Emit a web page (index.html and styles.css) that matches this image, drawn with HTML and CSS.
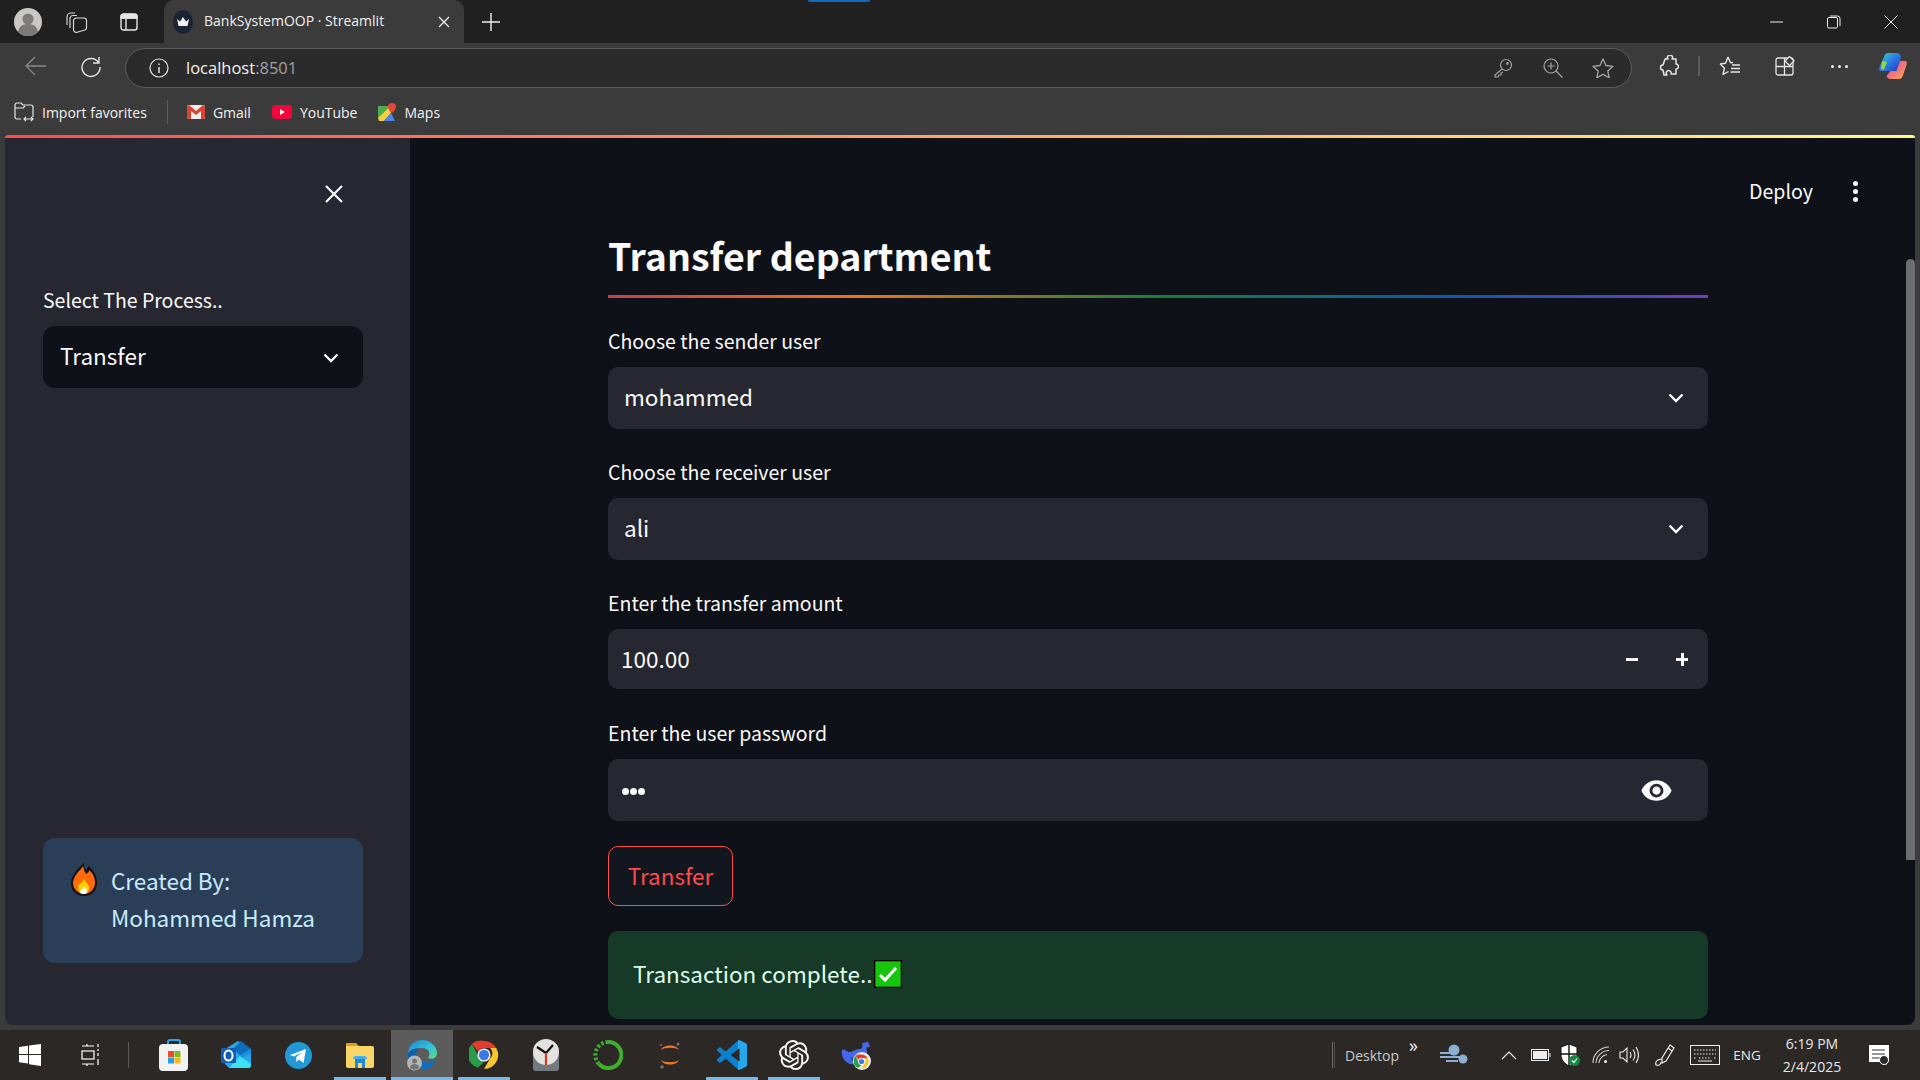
FILE: index.html
```html
<!DOCTYPE html>
<html lang="en">

<head>
  <meta charset="utf-8" />
  <title>BankSystemOOP · Streamlit</title>
  <link rel="stylesheet" href="styles.css">
</head>

<body>

  <svg class="defs" width="0" height="0">
    <symbol id="chrome" viewBox="0 0 32 32">
      <path d="M16 1a15 15 0 0 1 13 7.500H16a7.500 7.500 0 0 0-6.500 3.750L3 3.900A15 15 0 0 1 16 1z" fill="#e33b2e" />
      <path d="M3 4.500l6.500 11.250a7.500 7.500 0 0 0 6.500 7.750L9.500 29.500A15 15 0 0 1 3 4.500z" fill="#2a9d4a" />
      <path d="M29 8.500A15 15 0 0 1 16 31l6.500-11.250a7.500 7.500 0 0 0 0-11.250z" fill="#fbc52d" />
      <circle cx="16" cy="16" r="7" fill="#fff" />
      <circle cx="16" cy="16" r="5.500" fill="#3b78e7" />
    </symbol>
  </svg>

  <header class="tabbar">
    <div class="slot slot-avatar">
      <svg width="28" height="28" viewBox="0 0 28 28">
        <circle cx="14" cy="14" r="14" fill="#c9c8c3" />
        <circle cx="14" cy="11" r="5.500" fill="#7c7b78" />
        <path d="M4 24c1-6 5-8 10-8s9 2 10 8a14 14 0 0 1-20 0z" fill="#7c7b78" />
      </svg>
    </div>
    <div class="slot slot-workspaces">
      <svg width="22" height="22" viewBox="0 0 22 22" fill="none" stroke="#d8d8d8" stroke-width="1.200">
        <path d="M1 14V6a4 4 0 0 1 4-4h4" />
        <path d="M4 17V7.500a3 3 0 0 1 3-3h4" />
        <path d="M7.500 10a3 3 0 0 1 3-3H18a2.500 2.500 0 0 1 2.500 2.500V17a2 2 0 0 1-1.500 2l-7 2a3 3 0 0 1-4.500-3z" />
      </svg>
    </div>
    <div class="slot slot-vtabs">
      <svg width="18" height="18" viewBox="0 0 18 18" fill="none" stroke="#e6e6e6" stroke-width="1.400">
        <rect x="1" y="1" width="16" height="16" rx="2.500" />
        <path d="M1 5h16M6 5v12" />
        <path d="M1 3.500a2 2 0 0 1 2-2h12a2 2 0 0 1 2 2v1.500H1z" fill="#e6e6e6" />
      </svg>
    </div>
    <div class="tab">
      <svg class="tab-icon" width="20" height="24" viewBox="0 0 20 24">
        <ellipse cx="10" cy="12" rx="10" ry="12" fill="#1c2333" />
        <path d="M4 9l3 2.500L10 7l3 4.500L16 9l-1.500 7h-9z" fill="#f2f2f2" />
      </svg>
      <span class="tab-title">BankSystemOOP · Streamlit</span>
      <svg class="tab-close" width="12" height="12" viewBox="0 0 12 12" stroke="#eee" stroke-width="1.300">
        <path d="M1 1l10 10M11 1L1 11" />
      </svg>
    </div>
    <div class="slot slot-newtab">
      <svg width="18" height="18" viewBox="0 0 18 18" stroke="#eee" stroke-width="1.400">
        <path d="M9 0v18M0 9h18" />
      </svg>
    </div>
    <div class="win-controls">
      <div class="slot slot-win">
        <svg width="14" height="14" viewBox="0 0 14 14" stroke="#eee"><path d="M0 7h13" /></svg>
      </div>
      <div class="slot slot-win">
        <svg width="14" height="14" viewBox="0 0 14 14" fill="none" stroke="#eee">
          <rect x="0.500" y="2.500" width="10" height="10.500" rx="1.500" />
          <path d="M3 1h7.500a2.500 2.500 0 0 1 2.500 2.500V11" />
        </svg>
      </div>
      <div class="slot slot-win">
        <svg width="14" height="14" viewBox="0 0 14 14" stroke="#eee"><path d="M0.500 0.500l13 13M13.500 0.500l-13 13" /></svg>
      </div>
    </div>
    <span class="sliver"></span>
  </header>

  <div class="toolbar">
    <div class="slot slot-tool">
      <svg width="22" height="20" viewBox="0 0 22 20" fill="none" stroke="#8a8a8a" stroke-width="1.300">
        <path d="M21 10H1M10 1l-9 9 9 9" />
      </svg>
    </div>
    <div class="slot slot-tool">
      <svg class="reload" width="22" height="22" viewBox="0 0 22 22" fill="none" stroke="#e6e6e6" stroke-width="1.400">
        <path d="M18.500 6.500A9 9 0 1 0 20 11" />
        <path d="M19 1v6h-6" />
      </svg>
    </div>
    <div class="addressbar">
      <svg class="addr-info" width="20" height="20" viewBox="0 0 20 20" fill="none" stroke="#e6e6e6" stroke-width="1.200">
        <circle cx="10" cy="10" r="9" />
        <path d="M10 9v6" stroke-width="1.500" />
        <path d="M10 5.500v1.500" stroke-width="1.500" />
      </svg>
      <span class="addr-url">localhost<span class="addr-port">:8501</span></span>
      <svg class="addr-key" width="20" height="20" viewBox="0 0 20 20" fill="none" stroke="#a3a3a3" stroke-width="1.200">
        <circle cx="13" cy="7" r="5.500" />
        <path d="M9 11l-7 6v2h3l1-2h2v-2l2-1" />
        <circle cx="14.500" cy="5.500" r="0.800" />
      </svg>
      <svg class="addr-zoom" width="20" height="20" viewBox="0 0 20 20" fill="none" stroke="#a3a3a3" stroke-width="1.200">
        <circle cx="8" cy="8" r="7" />
        <path d="M13 13l6.500 6.500M4.500 8h7M8 4.500v7" />
      </svg>
      <svg class="addr-star" width="22" height="20" viewBox="0 0 22 20" fill="none" stroke="#a3a3a3" stroke-width="1.300" stroke-linejoin="round">
        <path d="M11 1l3 6.500 7 .8-5.200 4.700 1.400 6.800L11 16.400 4.800 19.800l1.400-6.800L1 8.300l7-.8z" />
      </svg>
    </div>
    <div class="slot slot-tool slot-puzzle">
      <svg width="20" height="22" viewBox="0 0 20 22" fill="none" stroke="#e6e6e6" stroke-width="1.500" stroke-linejoin="round">
        <path d="M6 4h3a2.500 2.500 0 1 1 4 0h4v5a2.500 2.500 0 1 1 0 5v5h-5a2.500 2.500 0 1 0-4 1H5l-1-5a2.500 2.500 0 1 1 0-5z" />
      </svg>
    </div>
    <span class="tool-sep"></span>
    <div class="slot slot-tool">
      <svg width="22" height="20" viewBox="0 0 22 20" fill="none" stroke="#e6e6e6" stroke-width="1.400" stroke-linejoin="round">
        <path d="M9 1l2.400 5.500 2.600.3M1 8l5.500-.8L9 1M1 8l4.400 4L4 18.500l5.500-3" />
        <path d="M13 9h8M12 12.500h9M11.500 16h9.500" />
      </svg>
    </div>
    <div class="slot slot-tool">
      <svg width="20" height="20" viewBox="0 0 20 20" fill="none" stroke="#e6e6e6" stroke-width="1.300">
        <rect x="1" y="2" width="17" height="17" rx="2" />
        <path d="M9.500 2v17M1 10.500h17" />
        <path d="M14.500 0.500l4.500 4.500-4.500 4.500L10 5z" fill="#3b3b3b" />
      </svg>
    </div>
    <div class="slot slot-tool">
      <span class="dots"><i></i><i></i><i></i></span>
    </div>
    <div class="slot slot-tool slot-copilot">
      <svg width="28" height="28" viewBox="0 0 28 28">
        <defs>
          <linearGradient id="copA" x1="0" y1="0" x2="1" y2="1">
            <stop offset="0" stop-color="#3bd5c8" />
            <stop offset="0.500" stop-color="#2b7be6" />
            <stop offset="1" stop-color="#2536b8" />
          </linearGradient>
          <linearGradient id="copB" x1="0" y1="0" x2="1" y2="1">
            <stop offset="0" stop-color="#d24fd8" />
            <stop offset="0.500" stop-color="#f4707d" />
            <stop offset="1" stop-color="#fbb14c" />
          </linearGradient>
        </defs>
        <path d="M9 1h9c2 0 3 1 4 4l-4 14H12L1 19c-1-1-1-3 0-5l4-9c1-3 2-4 4-4z" fill="url(#copA)" />
        <path d="M3 9l5 1-3 8-3-1z" fill="#8bd94a" />
        <path d="M21 9h5c2 0 2 2 1.500 4l-3 9c-1 3-2 5-5 5h-8c-2 0-3-1-4-3l4-5h6z" fill="url(#copB)" />
      </svg>
    </div>
  </div>

  <nav class="bookmarks">
    <a class="bm bm-import">
      <svg width="20" height="20" viewBox="0 0 20 20" fill="none" stroke="#e6e6e6" stroke-width="1.200">
        <path d="M7 17H3a2 2 0 0 1-2-2V3a2 2 0 0 1 2-2h4l2 2h8a2 2 0 0 1 2 2v10" />
        <path d="M1 6h8l2-2" />
        <path d="M10 17h9M12 15l-2 2 2 2M17 15l2 2-2 2" />
      </svg>
      Import favorites
    </a>
    <span class="bm-sep"></span>
    <a class="bm">
      <svg width="18" height="14" viewBox="0 0 18 14">
        <rect width="18" height="14" rx="1.500" fill="#eee" />
        <path d="M0 1.500v11A1.500 1.500 0 0 0 1.500 14H4V6l5 4 5-4v8h2.500a1.500 1.500 0 0 0 1.500-1.500v-11L16 0 9 6 2 0z" fill="#d9432f" />
      </svg>
      Gmail
    </a>
    <a class="bm">
      <svg width="20" height="14" viewBox="0 0 20 14">
        <rect width="20" height="14" rx="4" fill="#f4063a" />
        <path d="M8 4l5 3-5 3z" fill="#fff" />
      </svg>
      YouTube
    </a>
    <a class="bm">
      <svg width="18" height="18" viewBox="0 0 18 18">
        <path d="M0 3h12L0 15z" fill="#4cae4f" />
        <path d="M0 15L12 3l1 7-7 8H1z" fill="#f7cf3e" />
        <path d="M6 18l7-8 4 8z" fill="#4a86e8" />
        <path d="M14 0a4 4 0 0 1 4 4c0 3-4 6-4 6s-4-3-4-6a4 4 0 0 1 4-4z" fill="#e5483a" />
      </svg>
      Maps
    </a>
  </nav>

  <div class="rainbow-bar"></div>

  <div class="app">
    <aside class="sidebar">
      <div class="side-close">
        <svg width="18" height="18" viewBox="0 0 18 18" stroke="#fafafa" stroke-width="2.200">
          <path d="M1 1l16 16M17 1L1 17" />
        </svg>
      </div>
      <label class="lbl">Select The Process..</label>
      <div class="select select-dark">
        <span>Transfer</span>
        <svg class="chev" width="16" height="10" viewBox="0 0 16 10" fill="none" stroke="#fafafa" stroke-width="2.400">
          <path d="M1.500 1.500L8 8l6.500-6.500" />
        </svg>
      </div>
      <div class="credit">
        <svg class="fire" width="28" height="35" viewBox="0 0 28 35">
          <path d="M13 1c2 2 0 4 3 7 1-1 2-2 2-4 6 4 9 10 9 17 0 8-6 13-13 13S1 29 1 21c0-5 3-8 5-12 2-3 6-5 7-8z" fill="#111" />
          <path d="M13 4c1 3 1 5 3 8 2-1 3-2 3-4 4 3 6 8 6 13 0 6-5 11-11 11S3 27 3 21c0-4 2-7 5-11 2-2 4-4 5-6z" fill="#ff6a0d" />
          <path d="M14 17c1 3 4 4 5 8 0 4-2 7-5 7s-6-3-6-7c0-2 2-3 3-4 1 0 2-2 3-4z" fill="#ffd500" />
          <path d="M14 25c1 1 3 2 3 4s-1 3-3 3-4-1-4-2c0-2 2-2 4-5z" fill="#fff" />
        </svg>
        <div class="credit-text">Created By:<br>Mohammed Hamza</div>
      </div>
    </aside>

    <main class="main">
      <div class="deploy">
        <span>Deploy</span>
        <span class="kebab"><i></i><i></i><i></i></span>
      </div>
      <span class="scroll-thumb"></span>

      <h1 class="page-title">Transfer department</h1>
      <hr class="rule">

      <div class="field">
        <label class="lbl">Choose the sender user</label>
        <div class="select">
          <span>mohammed</span>
          <svg class="chev" width="16" height="10" viewBox="0 0 16 10" fill="none" stroke="#fafafa" stroke-width="2.400">
            <path d="M1.500 1.500L8 8l6.500-6.500" />
          </svg>
        </div>
      </div>

      <div class="field">
        <label class="lbl">Choose the receiver user</label>
        <div class="select">
          <span>ali</span>
          <svg class="chev" width="16" height="10" viewBox="0 0 16 10" fill="none" stroke="#fafafa" stroke-width="2.400">
            <path d="M1.500 1.500L8 8l6.500-6.500" />
          </svg>
        </div>
      </div>

      <div class="field field-number">
        <label class="lbl">Enter the transfer amount</label>
        <div class="number-input">
          <span class="number-value">100.00</span>
          <span class="stepper stepper-minus"></span>
          <span class="stepper stepper-plus"></span>
        </div>
      </div>

      <div class="field field-pass">
        <label class="lbl">Enter the user password</label>
        <div class="pass-input">
          <span class="pass-dots"><i></i><i></i><i></i></span>
          <svg class="eye" width="33" height="33" viewBox="0 0 24 24" fill="#fafafa">
            <path d="M12 4.500C7 4.500 2.730 7.610 1 12c1.730 4.390 6 7.500 11 7.500s9.270-3.110 11-7.500c-1.730-4.390-6-7.500-11-7.500zM12 17c-2.760 0-5-2.240-5-5s2.240-5 5-5 5 2.240 5 5-2.240 5-5 5zm0-8c-1.660 0-3 1.340-3 3s1.340 3 3 3 3-1.340 3-3-1.340-3-3-3z" />
          </svg>
        </div>
      </div>

      <button class="btn">Transfer</button>

      <div class="success">
        <span class="success-text">Transaction complete..</span>
        <svg class="success-check" width="28" height="28" viewBox="0 0 28 28">
          <rect x="0.500" y="0.500" width="27" height="27" fill="#16c60c" stroke="#000" stroke-width="1.600" />
          <path d="M6 15l5 5L22 8" fill="none" stroke="#fff" stroke-width="3" />
        </svg>
      </div>
    </main>
  </div>

  <footer class="taskbar">
    <div class="slot slot-start">
      <svg width="22" height="22" viewBox="0 0 22 22" fill="#fff">
        <path d="M0 3l9-1.200V10H0zM10 1.600L22 0v10H10zM0 11h9v8.500L0 18.300zM10 11h12v11l-12-1.700z" />
      </svg>
    </div>
    <div class="slot slot-taskview">
      <svg width="20" height="24" viewBox="0 0 20 24" fill="none" stroke="#fff" stroke-width="1.200">
        <rect x="1" y="8" width="12" height="8" />
        <path d="M1 3h12M1 21h12M6 1v2M6 21v2M17 1v3M17 6v2M17 10v3M17 16v6" />
      </svg>
    </div>
    <span class="task-sep"></span>

    <div class="task"><svg width="30" height="32" viewBox="0 0 30 32">
        <path d="M9 7V3q0-2 2-2h8q2 0 2 2v4" fill="none" stroke="#2aa3e8" stroke-width="2" />
        <rect y="5" width="29" height="27" rx="4" fill="#f2f2f2" />
        <rect x="9" y="12" width="6" height="6" fill="#e8502c" />
        <rect x="15.500" y="12" width="6" height="6" fill="#7fbb24" />
        <rect x="9" y="18.500" width="6" height="6" fill="#1fa2e8" />
        <rect x="15.500" y="18.500" width="6" height="6" fill="#fdb813" />
      </svg></div>
    <div class="task"><svg width="30" height="28" viewBox="0 0 30 28">
        <path d="M4 8l13-8 13 8v16a3 3 0 0 1-3 3H8l-4-4z" fill="#28a8ea" />
        <path d="M12 8l8-8 10 8-11 6z" fill="#0f6cbd" />
        <path d="M19 14l11-6v4l-11 6z" fill="#1490df" />
        <path d="M8 27l11-12 11 8v1a3 3 0 0 1-3 3z" fill="#3de0f5" />
        <rect y="7" width="15" height="15" rx="1" fill="#0f5fb5" />
        <ellipse cx="7.500" cy="14.500" rx="4" ry="5" fill="none" stroke="#fff" stroke-width="2" />
      </svg></div>
    <div class="task"><svg width="27" height="27" viewBox="0 0 27 27">
        <circle cx="13.500" cy="13.500" r="13.500" fill="#2298d6" />
        <path d="M5 13l16-6-2.500 14-4.500-3.500-2.500 2.500-.5-4.500 6-5.500-8 4.500z" fill="#fff" />
      </svg></div>
    <div class="task task-open"><svg width="28" height="26" viewBox="0 0 28 26">
        <path d="M0 2a1 1 0 0 1 1-1h9l3 3h-13z" fill="#e0a010" />
        <path d="M0 4h26a2 2 0 0 1 2 2v18a2 2 0 0 1-2 2H2a2 2 0 0 1-2-2z" fill="#fbd666" />
        <path d="M9 26v-9h10v9h-3v-5h-4v5z" fill="#1f8ad3" />
        <path d="M7 17q0-3 3-3h8q3 0 3 3z" fill="#42aef0" />
      </svg></div>
    <div class="task task-open task-active"><svg width="30" height="31" viewBox="0 0 30 31">
        <defs>
          <linearGradient id="edgeA" x1="0" y1="0" x2="1" y2="1">
            <stop offset="0" stop-color="#1b86d6" />
            <stop offset="0.600" stop-color="#35c6d8" />
            <stop offset="1" stop-color="#5fdc7a" />
          </linearGradient>
        </defs>
        <path d="M1 13C2 5 8 0 15 0c8 0 15 6 15 13 0 5-5 7-9 5 3-4 1-10-6-10C8 8 4 9 1 13z" fill="url(#edgeA)" />
        <path d="M1 13c3-4 7-5 11-4-3 2-4 6-1 11l-6 4c-3-3-5-7-4-11z" fill="#0f5fb0" />
        <path d="M14 20c4 4 11 3 15-1-2 7-8 11-15 11z" fill="#0e6fc4" />
        <circle cx="7.500" cy="23" r="7.500" fill="#b5b5b5" />
        <circle cx="7.500" cy="21" r="2.500" fill="#757575" />
        <path d="M3 28c0-3 2-4 4.500-4s4.500 1 4.500 4a7.500 7.500 0 0 1-9 0z" fill="#757575" />
      </svg></div>
    <div class="task task-open"><svg width="30" height="30" viewBox="0 0 32 32"><use href="#chrome" /></svg></div>
    <div class="task"><svg width="30" height="32" viewBox="0 0 30 32">
        <path d="M2 12C2 5 8 1 15 1s13 4 13 11v17a3 3 0 0 1-3 3H5a3 3 0 0 1-3-3z" fill="#727a80" />
        <circle cx="15" cy="13" r="13" fill="#e2e2e0" />
        <path d="M6 8l9 6 7-8" fill="none" stroke="#111" stroke-width="2.200" />
        <path d="M15 14v12" stroke="#d8391c" stroke-width="2.200" />
      </svg></div>
    <div class="task"><svg width="30" height="30" viewBox="0 0 30 30" fill="none">
        <path d="M15 2a13 13 0 1 1-9 22" stroke="#3fb02b" stroke-width="4" />
        <path d="M15 2A13 13 0 0 0 6 24" stroke="#3fb02b" stroke-width="4" stroke-dasharray="2.500 2" />
      </svg></div>
    <div class="task"><svg width="24" height="30" viewBox="0 0 24 30">
        <path d="M3 10c2-6 16-6 18 0-3-3-15-3-18 0z" fill="#f37626" />
        <path d="M3 20c2 6 16 6 18 0-3 3-15 3-18 0z" fill="#f37626" />
        <circle cx="20" cy="4" r="1.500" fill="#767677" />
        <circle cx="4" cy="27" r="1.800" fill="#767677" />
        <circle cx="3" cy="5" r="1" fill="#767677" />
      </svg></div>
    <div class="task task-open"><svg width="30" height="30" viewBox="0 0 24 24">
        <defs>
          <linearGradient id="vsA" x1="0" y1="0" x2="1" y2="0">
            <stop offset="0.700" stop-color="#0d7fcf" />
            <stop offset="0.700" stop-color="#25a7ed" />
          </linearGradient>
        </defs>
        <path d="M23.150 2.587L18.210.21a1.494 1.494 0 0 0-1.705.29l-9.460 8.630-4.120-3.128a.999.999 0 0 0-1.276.057L.327 7.261A1 1 0 0 0 .326 8.740L3.899 12 .326 15.260a1 1 0 0 0 .001 1.479L1.650 17.940a.999.999 0 0 0 1.276.057l4.120-3.128 9.460 8.630a1.492 1.492 0 0 0 1.704.29l4.942-2.377A1.500 1.500 0 0 0 24 20.060V3.939a1.500 1.500 0 0 0-.85-1.352zm-5.146 14.861L10.826 12l7.178-5.448v10.896z" fill="url(#vsA)" />
      </svg></div>
    <div class="task task-open"><svg width="30" height="30" viewBox="0 0 24 24" fill="#f4f4f4">
        <path d="M22.282 9.821a5.985 5.985 0 0 0-.516-4.911 6.046 6.046 0 0 0-6.510-2.900A6.065 6.065 0 0 0 4.981 4.182a5.985 5.985 0 0 0-3.998 2.900 6.046 6.046 0 0 0 .743 7.097 5.980 5.980 0 0 0 .511 4.911 6.051 6.051 0 0 0 6.515 2.900A5.985 5.985 0 0 0 13.260 24a6.056 6.056 0 0 0 5.772-4.206 5.989 5.989 0 0 0 3.998-2.900 6.056 6.056 0 0 0-.748-7.073zm-9.022 12.608a4.476 4.476 0 0 1-2.876-1.041l.142-.080 4.778-2.758a.795.795 0 0 0 .393-.681v-6.737l2.020 1.169a.071.071 0 0 1 .038.052v5.583a4.504 4.504 0 0 1-4.495 4.494zm-9.661-4.125a4.471 4.471 0 0 1-.535-3.014l.142.085 4.783 2.758a.771.771 0 0 0 .781 0l5.843-3.369v2.332a.080.080 0 0 1-.033.062L9.740 19.950a4.499 4.499 0 0 1-6.141-1.646zM2.341 7.896a4.485 4.485 0 0 1 2.365-1.973V11.600a.766.766 0 0 0 .388.677l5.814 3.354-2.020 1.169a.076.076 0 0 1-.071 0l-4.830-2.787A4.504 4.504 0 0 1 2.341 7.872zm16.596 3.856L13.104 8.364 15.119 7.200a.076.076 0 0 1 .071 0l4.830 2.791a4.494 4.494 0 0 1-.676 8.105v-5.678a.790.790 0 0 0-.407-.667zm2.011-3.023l-.142-.085-4.774-2.782a.776.776 0 0 0-.785 0L9.409 9.230V6.897a.066.066 0 0 1 .028-.061l4.830-2.787a4.499 4.499 0 0 1 6.680 4.660zM8.307 12.863l-2.020-1.164a.080.080 0 0 1-.038-.057V6.074a4.499 4.499 0 0 1 7.376-3.454l-.142.081L8.704 5.459a.795.795 0 0 0-.393.681zm1.098-2.365l2.602-1.500 2.607 1.500v2.999l-2.597 1.500-2.607-1.500z" />
      </svg></div>
    <div class="task task-badge"><svg width="30" height="30" viewBox="0 0 30 30">
        <path d="M1 10c3-2 4 2 8 2 3 0 5-3 10-3 2 0 3-3 2-6 3 0 5-1 6-2 0 3 2 4 2 6-1 0-3 0-4 1 2 3 1 9-3 13-3 3-8 4-13 3C3 22 0 16 1 10z" fill="#4468e8" />
        <path d="M9 16c3 4 6 4 9 2-2 3-5 4-7 3z" fill="#2d3a8f" />
        <circle cx="21" cy="21" r="9" fill="#eee" />
      </svg>
      <svg class="badge-chrome" width="15" height="15" viewBox="0 0 32 32"><use href="#chrome" /></svg>
    </div>

    <div class="tray">
      <span class="tray-sep"></span>
      <span class="tray-desktop">Desktop</span>
      <span class="tray-more">»</span>
      <svg class="t-wind" width="28" height="22" viewBox="0 0 28 22" fill="#8eaed0">
        <circle cx="14" cy="6" r="5.500" />
        <circle cx="23" cy="15" r="4.500" />
        <path d="M0 8h12v2H0zM0 12h24v2H0zM6 16h12v2H6z" />
      </svg>
      <svg class="t-caret" width="16" height="9" viewBox="0 0 16 9" fill="none" stroke="#eee" stroke-width="1.200">
        <path d="M1 8l7-7 7 7" />
      </svg>
      <svg class="t-batt" width="20" height="12" viewBox="0 0 20 12" fill="none" stroke="#eee">
        <rect x="0.500" y="0.500" width="17" height="11" />
        <rect x="2" y="2" width="14" height="8" fill="#eee" stroke="none" />
        <path d="M19 4v4" />
      </svg>
      <svg class="t-shield" width="20" height="24" viewBox="0 0 20 24">
        <path d="M9 1l8 3v8c0 5-4 9-8 11-4-2-8-6-8-11V4z" fill="#fff" stroke="#111" />
        <path d="M9 1v22M1 11h16" stroke="#111" stroke-width="1.400" />
        <circle cx="14.500" cy="17.500" r="5.500" fill="#128a3f" />
        <path d="M12 17.500l2 2 3-4" fill="none" stroke="#fff" stroke-width="1.200" />
      </svg>
      <svg class="t-wifi" width="18" height="18" viewBox="0 0 18 18" fill="none" stroke="#cfcfcf" stroke-width="1.100">
        <path d="M1 17A16 16 0 0 1 17 1M4 17A13 13 0 0 1 17 4.500M7 17a10 10 0 0 1 8-8.500" />
        <circle cx="13.500" cy="15.500" r="1.500" fill="#eee" stroke="none" />
      </svg>
      <svg class="t-sound" width="20" height="18" viewBox="0 0 20 18" fill="none" stroke="#eee" stroke-width="1.100">
        <path d="M1 6h3l4-4v14l-4-4H1z" />
        <path d="M11 6q2 3 0 6M14 3.500q4 5.500 0 11M17 1q5 8 0 16" />
      </svg>
      <svg class="t-pen" width="22" height="24" viewBox="0 0 22 24" fill="none" stroke="#eee" stroke-width="1.200">
        <path d="M15 2l4 3-8 13-4 2 0-5z" />
        <path d="M13 5l4 3M7 16c-5 0-7 3-6 6 2 1 5 0 5-3" />
      </svg>
      <svg class="t-keys" width="30" height="20" viewBox="0 0 30 20" fill="none" stroke="#eee">
        <rect x="0.500" y="0.500" width="29" height="19" />
        <path d="M4 5h22M4 9h22M4 13h2M9 13h12M24 13h2" stroke-dasharray="1.500 1.500" />
        <path d="M8 16h14" />
      </svg>
      <span class="t-eng">ENG</span>
      <span class="t-clock">6:19 PM<br>2/4/2025</span>
      <svg class="t-notif" width="20" height="20" viewBox="0 0 20 20">
        <path d="M0 0h20v16l-3 4-4-3H0z" fill="#fff" />
        <path d="M3 5h13M3 9h13M3 13h8" stroke="#333" stroke-width="1.200" />
        <circle cx="15" cy="15" r="4.500" fill="#2b2826" stroke="#fff" />
      </svg>
    </div>
  </footer>

</body>

</html>
```

FILE: styles.css
```css
* {
  box-sizing: border-box;
}

body {
  width: 1920px;
  height: 1080px;
  margin: 0;
  overflow: hidden;
  display: flex;
  flex-direction: column;
  background-color: #3b3b3b;
  font-family: "Open Sans", "Noto Sans", sans-serif;
  color: #fafafa;
}

.defs {
  position: absolute;
}

svg {
  flex: none;
  display: block;
}

.slot {
  display: flex;
  align-items: center;
  justify-content: center;
  flex: none;
}

/* browser tabs */
.tabbar {
  position: relative;
  display: flex;
  align-items: center;
  height: 43px;
  flex: none;
  background-color: #202020;
}

.slot-avatar {
  width: 56px;
}

.slot-workspaces {
  width: 41px;
}

.slot-vtabs {
  width: 64px;
  margin-right: 3px;
}

.tab {
  display: flex;
  align-items: center;
  width: 300px;
  height: 43px;
  padding-left: 9px;
  background-color: #3b3b3b;
  border-radius: 10px 10px 0 0;
}

.tab-title {
  flex: 1;
  margin: 0 0 2px 11px;
  font-size: 14px;
  color: #f0f0f0;
  white-space: nowrap;
}

.tab-close {
  margin-right: 14px;
}

.slot-newtab {
  width: 54px;
}

.win-controls {
  display: flex;
  margin-left: auto;
  margin-right: 1px;
}

.slot-win {
  width: 57px;
}

.sliver {
  position: absolute;
  left: 808px;
  top: 0;
  width: 62px;
  height: 2px;
  background-color: #0f6cbd;
  border-radius: 0 0 2px 2px;
}

/* address row */
.toolbar {
  display: flex;
  align-items: center;
  height: 46px;
  flex: none;
  padding-left: 8px;
}

.slot-tool {
  width: 55px;
  height: 46px;
}

.slot-copilot {
  width: 51px;
}

.reload {
  margin-top: 2px;
}

.slot-puzzle {
  margin-left: 9px;
}

.addressbar {
  display: flex;
  align-items: center;
  width: 1507px;
  height: 40px;
  margin-left: 7px;
  margin-top: 3px;
  padding-left: 23px;
  background-color: #2b2b2b;
  border: 1.500px solid #5c5c5c;
  border-radius: 20px;
}

.addr-url {
  flex: 1;
  margin-left: 17px;
  font-size: 16.500px;
  color: #f2f2f2;
}

.addr-port {
  color: #a0a0a0;
}

.addr-zoom {
  margin-left: 30px;
}

.addr-star {
  margin-left: 29px;
  margin-right: 17px;
}

.tool-sep {
  width: 2px;
  height: 20px;
  background-color: #5c5c5c;
  margin: 0 2px;
}

.dots {
  display: flex;
  gap: 4px;
}

.dots i {
  width: 3px;
  height: 3px;
  border-radius: 50%;
  background-color: #eee;
}

/* favorites row */
.bookmarks {
  display: flex;
  align-items: center;
  height: 46px;
  flex: none;
  padding-left: 14px;
  font-size: 14px;
  color: #f0f0f0;
}

.bm {
  display: flex;
  align-items: center;
  gap: 8px;
  margin-right: 21px;
}

.bm-import {
  margin-right: 20px;
}

.bm-sep {
  width: 1px;
  height: 24px;
  background-color: #5c5c5c;
  margin-right: 19px;
}

.rainbow-bar {
  height: 3px;
  flex: none;
  margin: 0 5px;
  background: linear-gradient(90deg, #ff4b4b, #fffd80);
  border-radius: 3px 3px 0 0;
}

/* streamlit app */
.app {
  display: flex;
  flex: 1;
  margin: 0 5px 5px;
  min-height: 0;
  border-radius: 0 0 8px 8px;
  overflow: hidden;
  font-family: "Noto Sans CJK SC", "Noto Sans", sans-serif;
}

.sidebar {
  display: flex;
  flex-direction: column;
  width: 405px;
  flex: none;
  padding: 0 47px 0 38px;
  background-color: #262730;
}

.side-close {
  display: flex;
  justify-content: flex-end;
  margin: 47px 20px 85px 0;
}

.lbl {
  display: block;
  height: 25px;
  margin-bottom: 13px;
  font-size: 19.500px;
  line-height: 23px;
  color: #fafafa;
}

.select {
  display: flex;
  align-items: center;
  justify-content: space-between;
  height: 62px;
  padding: 0 24px 4px 16px;
  font-size: 22.500px;
  line-height: 32px;
  background-color: #262730;
  border-radius: 10px;
}

.chev {
  margin-top: 4px;
}

.select-dark {
  padding-left: 17px;
  background-color: #0e1117;
  border-radius: 12px;
}

.select-dark .chev {
  margin-top: 6px;
}

.credit {
  display: flex;
  gap: 13px;
  height: 125px;
  margin-top: auto;
  margin-bottom: 62px;
  padding: 24px 0 0 27px;
  background-color: #2b3e57;
  border-radius: 12px;
}

.credit-text {
  font-size: 22.500px;
  line-height: 37px;
  color: #c7ebff;
}

.main {
  position: relative;
  flex: 1;
  padding: 90px 207px 0 198px;
  background-color: #0e1117;
}

.deploy {
  position: absolute;
  top: 36px;
  right: 57px;
  display: flex;
  align-items: center;
  gap: 40px;
  font-size: 19.600px;
  line-height: 34px;
}

.kebab {
  display: flex;
  flex-direction: column;
  gap: 3px;
}

.kebab i {
  width: 5px;
  height: 5px;
  border-radius: 50%;
  background-color: #fafafa;
}

.scroll-thumb {
  position: absolute;
  top: 121px;
  right: 0;
  width: 9px;
  height: 601px;
  background-color: #6b6d70;
  border-radius: 5px 5px 0 0;
}

.page-title {
  height: 56px;
  margin: 0;
  font-size: 37.500px;
  font-weight: 700;
  line-height: 54px;
}

.rule {
  height: 3px;
  margin: 11px 0 32px;
  border: 0;
  background: linear-gradient(90deg, #c0424a, #ef7316 23%, #17803a 50%, #0b59ab 75%, #6d3fc0);
}

.field {
  margin-bottom: 32px;
}

.field .lbl {
  margin-bottom: 12px;
  line-height: 21px;
}

.number-input {
  display: flex;
  align-items: center;
  height: 60px;
  padding-left: 13px;
  font-size: 22.500px;
  background-color: #262730;
  border-radius: 10px;
}

.number-value {
  flex: 1;
  margin-bottom: 2px;
}

.field-number {
  margin-bottom: 33px;
}

.stepper {
  position: relative;
  width: 50px;
  height: 60px;
}

.stepper::before {
  content: "";
  position: absolute;
  left: 18px;
  top: 29px;
  width: 12px;
  height: 3px;
  background-color: #fafafa;
}

.stepper-plus::after {
  content: "";
  position: absolute;
  left: 22.500px;
  top: 24px;
  width: 3px;
  height: 13px;
  background-color: #fafafa;
}

.pass-input {
  display: flex;
  align-items: center;
  justify-content: space-between;
  height: 62px;
  padding: 0 35px 0 14px;
  background-color: #262730;
  border-radius: 10px;
}

.pass-dots {
  display: flex;
  gap: 1px;
  margin-top: 3px;
}

.pass-dots i {
  width: 7px;
  height: 7px;
  border-radius: 50%;
  background-color: #fafafa;
}

.field-pass {
  margin-bottom: 25px;
}

.btn {
  display: block;
  width: 125px;
  height: 60px;
  padding: 0 0 2px;
  font-family: inherit;
  font-size: 22.500px;
  color: #ff4b4b;
  background-color: #12161f;
  border: 1px solid #ff4b4b;
  border-radius: 10px;
}

.success {
  display: flex;
  align-items: center;
  gap: 2px;
  height: 88px;
  margin-top: 25px;
  padding-left: 25px;
  font-size: 22.500px;
  color: #dffde9;
  background-color: #173928;
  border-radius: 10px;
}

.success-text {
  margin-bottom: 4px;
}

.success-check {
  margin-bottom: 2px;
}

/* windows taskbar */
.taskbar {
  display: flex;
  align-items: center;
  height: 50px;
  flex: none;
  background-color: #2b2826;
}

.slot-start {
  width: 59px;
}

.slot-taskview {
  width: 64px;
}

.task-sep {
  width: 1px;
  height: 26px;
  margin: 0 14px 0 5px;
  background-color: #5a5a5a;
}

.task {
  position: relative;
  display: flex;
  align-items: center;
  justify-content: center;
  width: 62px;
  height: 50px;
}

.task-open::after {
  content: "";
  position: absolute;
  left: 5px;
  right: 5px;
  bottom: 0;
  height: 3px;
  background-color: #76b9ed;
}

.task-active {
  background-color: #5c5c5c;
}

.task-active::after {
  left: 0;
  right: 0;
}

.badge-chrome {
  position: absolute;
  left: 29px;
  top: 24px;
}

.tray {
  display: flex;
  align-items: center;
  height: 50px;
  margin-left: auto;
  padding-right: 31px;
  color: #e8e8e8;
  font-size: 14px;
}

.tray-sep {
  width: 3px;
  height: 26px;
  border-left: 1px solid #6a6a6a;
  border-right: 1px solid #4e4e4e;
}

.tray-desktop {
  width: 55px;
  margin-left: 10px;
  font-size: 14px;
  color: #c8c8c8;
}

.tray-more {
  width: 14px;
  margin: 0 0 20px 9px;
  font-size: 18px;
  line-height: 20px;
  color: #f2f2f2;
}

.t-wind {
  margin-left: 17px;
}

.t-caret {
  margin-left: 33px;
}

.t-batt {
  margin-left: 14px;
}

.t-shield {
  margin-left: 9px;
}

.t-wifi {
  margin-left: 12px;
}

.t-sound {
  margin-left: 9px;
}

.t-pen {
  margin-left: 16px;
}

.t-keys {
  margin-left: 13px;
}

.t-eng {
  width: 28px;
  margin-left: 13px;
  font-size: 13.500px;
  text-align: center;
  white-space: nowrap;
}

.t-clock {
  width: 60px;
  margin-left: 21px;
  font-size: 14px;
  line-height: 23px;
  text-align: center;
  white-space: nowrap;
}

.t-notif {
  margin-left: 27px;
}
```
